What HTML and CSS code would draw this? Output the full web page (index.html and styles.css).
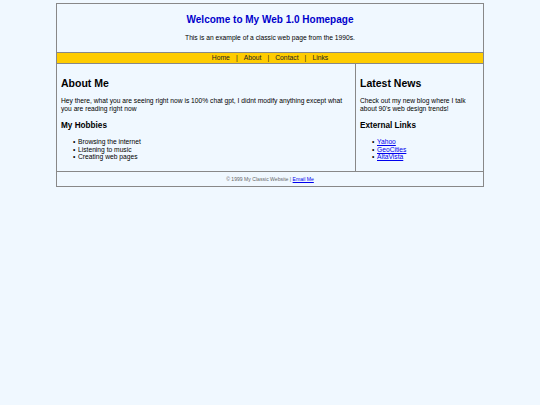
FILE: index.html
```html
<!DOCTYPE html>
<html lang="en">
<head>
<meta charset="utf-8">
<title>My Web 1.0 Homepage</title>
<link rel="stylesheet" href="styles.css">
</head>
<body>
<div class="container">
  <header class="header">
    <h1 class="title">Welcome to My Web 1.0 Homepage</h1>
    <p class="subtitle">This is an example of a classic web page from the 1990s.</p>
  </header>
  <nav class="nav">
    <a href="#" class="nav-link">Home</a><span class="sep">|</span><a href="#" class="nav-link">About</a><span class="sep">|</span><a href="#" class="nav-link">Contact</a><span class="sep">|</span><a href="#" class="nav-link">Links</a>
  </nav>
  <div class="main">
    <section class="content">
      <h2 class="section-title">About Me</h2>
      <p class="text">Hey there, what you are seeing right now is 100% chat gpt, I didnt modify anything except what you are reading right now</p>
      <h3 class="sub-title">My Hobbies</h3>
      <ul class="list">
        <li>Browsing the internet</li>
        <li>Listening to music</li>
        <li>Creating web pages</li>
      </ul>
    </section>
    <aside class="sidebar">
      <h2 class="section-title">Latest News</h2>
      <p class="text">Check out my new blog where I talk about 90's web design trends!</p>
      <h3 class="sub-title">External Links</h3>
      <ul class="list">
        <li><a href="#" class="link">Yahoo</a></li>
        <li><a href="#" class="link">GeoCities</a></li>
        <li><a href="#" class="link">AltaVista</a></li>
      </ul>
    </aside>
  </div>
  <footer class="footer">
    &copy; 1999 My Classic Website | <a href="#" class="link">Email Me</a>
  </footer>
</div>
</body>
</html>
```

FILE: styles.css
```css
html, body {
  margin: 0;
  padding: 0;
  background: #f0f8ff;
}
body {
  font-family: "Liberation Sans", Arial, sans-serif;
  color: #000;
  padding-top: 3px;
}
.container {
  width: 426px;
  margin: 0 auto;
  border: 1px solid #888;
  background: #f0f8ff;
}
.header {
  text-align: center;
  padding: 10px 0 10px;
}
.title {
  margin: 0;
  font-size: 10px;
  line-height: 12px;
  font-weight: bold;
  color: #0000cc;
}
.subtitle {
  margin: 7px 0 0;
  font-size: 6.7px;
  line-height: 9px;
}
.nav {
  background: #ffcc00;
  border-top: 1px solid #888;
  border-bottom: 1px solid #888;
  text-align: center;
  font-size: 6.8px;
  line-height: 10px;
  height: 10px;
  color: #222;
}
.nav-link {
  color: #222;
  text-decoration: none;
  margin: 0 6px;
}
.sep {
  color: #222;
}
.main {
  display: flex;
}
.content {
  width: 290px;
  padding: 0 4px 10px;
  border-right: 1px solid #888;
}
.sidebar {
  flex: 1;
  padding: 0 4px 10px;
}
.section-title {
  margin: 13px 0 0;
  font-size: 10.5px;
  line-height: 12px;
  font-weight: bold;
}
.text {
  margin: 8px 0 0;
  font-size: 6.7px;
  line-height: 8px;
}
.sub-title {
  margin: 8px 0 0;
  font-size: 8.2px;
  line-height: 10px;
  font-weight: bold;
}
.list {
  margin: 7px 0 0;
  padding-left: 17px;
  list-style: none;
  font-size: 6.7px;
  line-height: 7.5px;
}
.list li::before {
  content: "\2022";
  display: inline-block;
  width: 5px;
  margin-left: -5px;
  color: #000;
}
.link {
  color: #0000ee;
  text-decoration: underline;
}
.footer {
  border-top: 1px solid #888;
  text-align: center;
  font-size: 5.1px;
  line-height: 14px;
  color: #666;
}
```
